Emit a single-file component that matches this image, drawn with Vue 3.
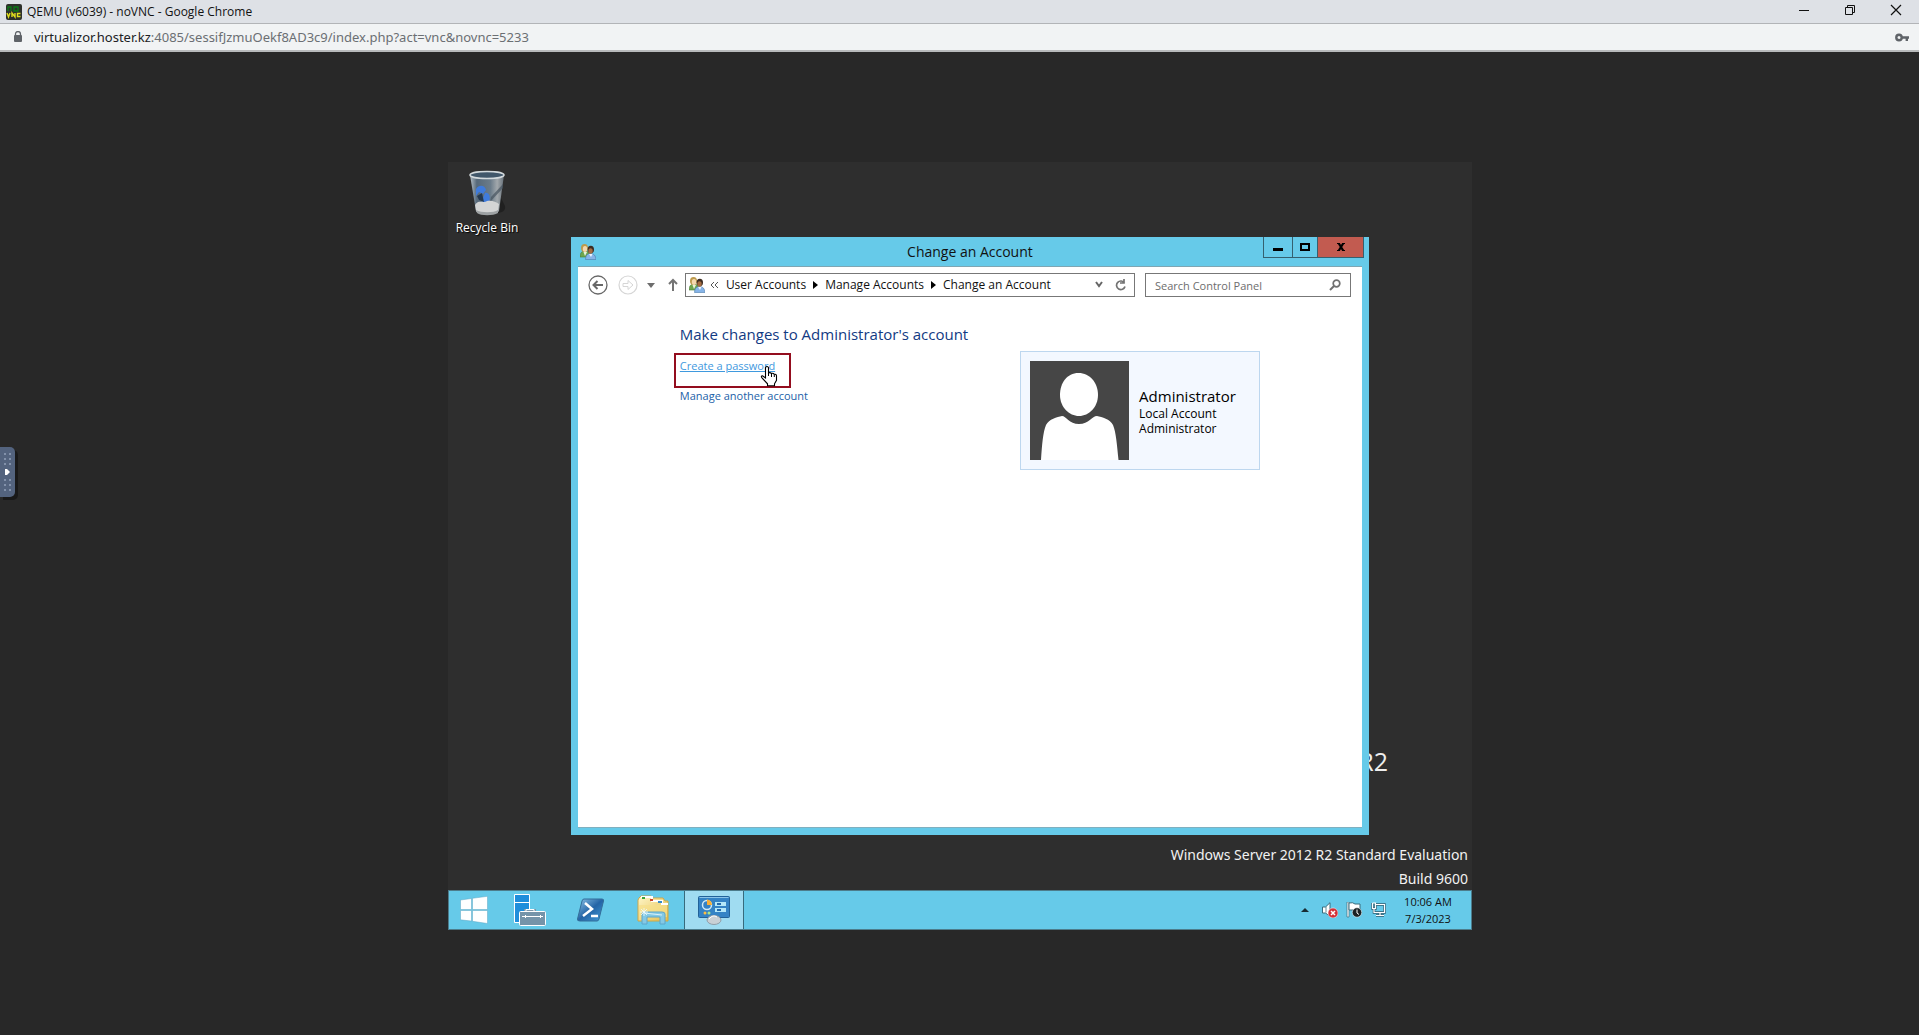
<template>
  <div class="page">
    <header class="chrome-title">
      <svg class="favicon" width="16" height="16" viewBox="0 0 16 16">
        <rect width="16" height="16" rx="2" fill="#2d302b" />
        <path d="M2 7V3h3v4M8 3h4v4H8z" fill="none" stroke="#0b7a16" stroke-width="1.3" />
        <path d="M1 9l1.500 4L4 9M6 13V9l3 4V9M14.500 9.500h-3v3h3" fill="none" stroke="#e0df1c" stroke-width="1.400" />
      </svg>
      <span class="chrome-name">QEMU (v6039) - noVNC - Google Chrome</span>
      <div class="chrome-controls">
        <button aria-label="Minimize"><svg width="12" height="12"><path d="M1 6.500h10" stroke="#111" /></svg></button>
        <button aria-label="Restore">
          <svg width="12" height="12" fill="none" stroke="#111"><path d="M1.500 3.500h7v7h-7zM3.500 3.500v-2h7v7h-2" /></svg>
        </button>
        <button aria-label="Close"><svg width="12" height="12"><path d="M1 1l10 10M11 1L1 11" stroke="#111" stroke-width="1.200" /></svg></button>
      </div>
    </header>
    <div class="chrome-url">
      <svg width="10" height="12" viewBox="0 0 10 12">
        <path d="M2.500 5V3a2.500 2.500 0 0 1 5 0v2" fill="none" stroke="#5f6368" stroke-width="1.300" />
        <rect x="1" y="4" width="8" height="7" rx="1" fill="#5f6368" />
      </svg>
      <span class="url"><b>virtualizor.hoster.kz</b>:4085/sessifJzmuOekf8AD3c9/index.php?act=vnc&amp;novnc=5233</span>
      <svg class="key" width="14" height="9" viewBox="0 0 14 9">
        <circle cx="4" cy="4.500" r="2.700" fill="none" stroke="#5f6368" stroke-width="2.400" />
        <path d="M7 3.200h7v2.600h-1V8h-2.400V5.800H7z" fill="#5f6368" />
      </svg>
    </div>

    <main class="stage">
      <button class="vnc-handle" aria-label="Open control bar">
        <svg width="16" height="50" viewBox="0 0 16 50">
          <g fill="#8291aa">
            <template v-for="y in dots" :key="y">
              <rect x="4" :y="y" width="2" height="2" />
              <rect x="9" :y="y" width="2" height="2" />
            </template>
          </g>
          <path d="M5 22h2l3 3-3 3H5z" fill="#fff" />
        </svg>
      </button>

      <div class="desktop">
        <div class="workspace">
          <a class="recycle" href="#">
            <svg width="38" height="46" viewBox="0 0 38 46">
              <defs>
                <linearGradient id="glass" x1="0" x2="1" y1="0" y2="0">
                  <stop offset="0" stop-color="#b4bec5" />
                  <stop offset=".2" stop-color="#56697a" />
                  <stop offset=".6" stop-color="#6b7c8a" />
                  <stop offset=".8" stop-color="#a2a8ac" />
                  <stop offset="1" stop-color="#67717a" />
                </linearGradient>
              </defs>
              <path d="M31 24l6 12c1 5-4 7-8 7z" fill="#202020" />
              <path d="M2 5l6 36c1 4 21 4 23 0l5-36z" fill="url(#glass)" />
              <path d="M35 14L23 27l-1 5 13-14z" fill="#46535e" opacity=".7" />
              <path d="M8 19c3-5 9-4 10 1l-3 4-4-2-3 4zM14 31l3-8c4-1 6 4 4 9l-5 2z" fill="#3f7bdc" />
              <path d="M9 26l5-3 2 9-5-2z" fill="#24384f" />
              <path d="M7 35c4-6 8-1 12-4 5-1 9 1 12 3l-1 7c-4 4-19 4-22 0z" fill="#d4d5d5" />
              <path d="M8 40c5 3 18 3 22 0v3c-5 3-17 3-21 0z" fill="#9da1a3" />
              <ellipse cx="19" cy="5" rx="17" ry="3.500" fill="#41576a" stroke="#d4dadd" stroke-width="1.500" />
            </svg>
            <span>Recycle Bin</span>
          </a>

          <div class="wallpaper-mark">R2</div>
          <div class="watermark">
            <p>Windows Server 2012 R2 Standard Evaluation</p>
            <p>Build 9600</p>
          </div>

          <section class="window">
            <header class="titlebar">
              <svg class="users-icon" width="16" height="16" viewBox="0 0 16 16"><use href="#users" /></svg>
              <h1>Change an Account</h1>
              <div class="controls">
                <button class="min" aria-label="Minimize window"><svg width="10" height="10"><path d="M0 6h10v3H0z" /></svg></button>
                <button class="max" aria-label="Maximize window">
                  <svg width="10" height="10"><path d="M1 2h8v6H1z" fill="none" stroke="#000" stroke-width="2" /></svg>
                </button>
                <button class="close" aria-label="Close window">
                  <svg width="10" height="8"><path d="M2.500 0l5 8M7.500 0l-5 8" fill="none" stroke="#000" stroke-width="2.200" /><path d="M1 0h3v1H1zM6 0h3v1H6zM1 7h3v1H1zM6 7h3v1H6z" /></svg>
                </button>
              </div>
            </header>

            <div class="client">
              <nav class="navbar">
                <button aria-label="Back">
                  <svg width="20" height="20" fill="none" stroke="#686868">
                    <circle cx="10" cy="10" r="9" stroke-width="1.300" />
                    <path d="M15 10H6M9.500 6l-4 4 4 4" stroke-width="2" />
                  </svg>
                </button>
                <button class="forward" aria-label="Forward">
                  <svg width="20" height="20" fill="none" stroke="#d6d6d6">
                    <circle cx="10" cy="10" r="9" stroke-width="1.200" />
                    <path d="M5 8.500h5v-3l5 4.500-5 4.500v-3H5z" />
                  </svg>
                </button>
                <button class="recent" aria-label="Recent locations"><svg width="8" height="5"><path d="M0 0h8L4 5z" fill="#6d6d6d" /></svg></button>
                <button class="up" aria-label="Up">
                  <svg width="10" height="14"><path d="M5 13V2M1 6l4-4 4 4" fill="none" stroke="#747474" stroke-width="2" /></svg>
                </button>
                <div class="address">
                  <svg width="16" height="16" viewBox="0 0 16 16"><use href="#users" /></svg>
                  <svg class="more" width="9" height="8" fill="none" stroke="#555"><path d="M4 1L1 4l3 3M8 1L5 4l3 3" /></svg>
                  <template v-for="(c, i) in crumbs" :key="c">
                    <svg v-if="i" class="sep" width="5" height="8"><path d="M0 0l5 4-5 4z" /></svg>
                    <button class="crumb">{{ c }}</button>
                  </template>
                  <button class="history" aria-label="Previous locations">
                    <svg width="8" height="8"><path d="M1 1l3 4 3-4" fill="none" stroke="#666" stroke-width="2" /></svg>
                  </button>
                  <button class="refresh" aria-label="Refresh">
                    <svg width="12" height="12"><path d="M9.500 4A4.300 4.300 0 1 0 10 7.500M5 4h4V0" fill="none" stroke="#737373" stroke-width="1.700" /></svg>
                  </button>
                </div>
                <label class="search">
                  <input type="text" placeholder="Search Control Panel" aria-label="Search Control Panel" />
                  <svg width="12" height="12" fill="none" stroke="#707070"><circle cx="7.500" cy="4.500" r="3.300" stroke-width="1.700" /><path d="M5 7l-4 4" stroke-width="2" /></svg>
                </label>
              </nav>

              <div class="content">
                <div class="tasks">
                  <h2>Make changes to Administrator's account</h2>
                  <div class="marked">
                    <a class="hovered" href="#">Create a password</a>
                    <svg class="pointer" width="18" height="22" viewBox="0 0 18 22">
                      <path d="M5.500 13V2.500q1.500-2 3 0V8q1.500-1 3 .5 1.500-.8 2.800.8 2-.5 2.200 1.500v4.500l-2 3.500v2H7.500v-2L2 13q-1.500-2 .5-2.200z" fill="#fff" stroke="#000" stroke-width="1.100" />
                      <path d="M8.500 7v4M11.500 8.500V12M14.300 9.500V12" stroke="#000" fill="none" />
                    </svg>
                  </div>
                  <a class="another" href="#">Manage another account</a>
                </div>
                <div class="account">
                  <svg width="99" height="99" viewBox="0 0 99 99">
                    <path d="M0 0h99v99H0z" fill="#464646" />
                    <path d="M48.500 12C60 12 68 22 68 34S59 55 49 55 30 46 30 34s7-22 18.500-22z" fill="#fff" />
                    <path d="M11 99c1-15 2-28 5-35 3-6 11-8 16-9 4 0 7 8 17 8s13-8 18-8c5 1 13 3 16 9 3 7 4 20 5.500 35z" fill="#fff" />
                  </svg>
                  <div class="account-text">
                    <strong>Administrator</strong>
                    <span>Local Account</span>
                    <span>Administrator</span>
                  </div>
                </div>
              </div>
            </div>
          </section>
        </div>

        <footer class="taskbar">
          <button class="start" aria-label="Start">
            <svg width="28" height="28" viewBox="0 0 28 28" fill="#fff" stroke="#5ca6c4" stroke-width=".5">
              <path d="M.5 4L11.500 2.500v11H.5zM12.500 2.300L27.500.3v13.200h-15zM.5 14.500h11v10.600L.5 23.800zM12.500 14.500h15v13l-15-2.200z" />
            </svg>
          </button>
          <button aria-label="Server Manager">
            <svg width="34" height="34" viewBox="0 0 34 34" stroke="#fff">
              <path d="M2.500 1.500h15v28h-15z" fill="#1f8edb" />
              <path d="M2 9.500h16" />
              <path d="M13.500 20v-2.500h9V20" fill="none" stroke="#7c96aa" stroke-width="3" />
              <path d="M14 19v-2.500h8V19" fill="none" />
              <rect x="7.500" y="18.500" width="26" height="14" rx="1" fill="#7594a9" />
              <path d="M10 23.500h21M13.500 22v3M28.500 22v3" />
            </svg>
          </button>
          <button aria-label="Windows PowerShell">
            <svg width="30" height="26" viewBox="0 0 30 26">
              <defs>
                <linearGradient id="ps" x1="0" y1="0" x2="1" y2="1"><stop stop-color="#8fc6e9" /><stop offset=".5" stop-color="#2464a6" /><stop offset="1" stop-color="#419cda" /></linearGradient>
              </defs>
              <path d="M8 2h18q2 0 1.500 2L23 22q-.5 2-2 2H4q-3 0-2.500-2L6 4q.5-2 2-2z" fill="url(#ps)" stroke="#336d99" />
              <path d="M9 6l7 6L7 19M15 19h7" fill="none" stroke="#fff" stroke-width="2.500" />
            </svg>
          </button>
          <button aria-label="File Explorer">
            <svg width="34" height="32" viewBox="0 0 34 32">
              <defs>
                <linearGradient id="folder" x1="0" y1="0" x2="1" y2="1"><stop stop-color="#fff7c9" /><stop offset="1" stop-color="#e4bd4b" /></linearGradient>
              </defs>
              <path d="M3 4l2-2h10l2 2h10l2 3h3v20H2V6z" fill="url(#folder)" stroke="#cda746" />
              <path d="M5 3h11v4h10v3h6" fill="none" stroke="#fff" stroke-width="2" />
              <path d="M6 3h3v2H6z" fill="#39a439" /><path d="M14 5h3v2h-3z" fill="#cb472d" /><path d="M22 7h4v2h-4z" fill="#398ac6" />
              <path d="M3 11h28v12H3z" fill="#f7e08a" opacity=".7" />
              <path d="M6 30V20q0-2 2-2h18q3 0 3 2v10h-5v-7H11v7z" fill="#83c9e5" stroke="#5da6ca" />
              <path d="M8 19l18 2M8 14v8M4 18h8M5 15l6 6M11 15l-6 6" stroke="#effcff" stroke-width=".8" />
            </svg>
          </button>
          <button class="active" aria-label="Control Panel">
            <svg width="34" height="30" viewBox="0 2 34 30">
              <rect x="1.500" y="3.500" width="31" height="21" rx="1" fill="#3483c5" stroke="#216299" />
              <path d="M2.500 4.500h29" stroke="#8bc5e9" />
              <circle cx="10" cy="12" r="4.500" fill="#3382c5" stroke="#cfeaf7" stroke-width="1.500" />
              <path d="M10 12V6.500a5.500 5.500 0 0 1 5 5.500z" fill="#f6ae36" />
              <path d="M18 9h11v4H18zM18 15h11v4H18z" fill="#b4e7f8" /><path d="M20 10h4v2h-4zM20 16h4v2h-4z" fill="#256aac" />
              <circle cx="8" cy="20" r="1.500" fill="#ffbd40" /><circle cx="12" cy="20" r="1.500" fill="#a9e78b" />
              <ellipse cx="17" cy="27" rx="7" ry="4.500" fill="#c9d0d5" stroke="#8f9da7" />
              <path d="M12 26q4-5 8-2" stroke="#fff" fill="none" />
            </svg>
          </button>

          <div class="tray">
            <button class="tray-up" aria-label="Show hidden icons"><svg width="8" height="4"><path d="M0 4h8L4 0z" fill="#182b33" /></svg></button>
            <button aria-label="Volume">
              <svg width="16" height="16" viewBox="0 0 16 16">
                <path d="M.5 5h3L8 .7v13.600L3.500 11h-3z" fill="#fff" stroke="#3a6c7d" /><path d="M4 4.500v6" stroke="#638b99" />
                <circle cx="11" cy="11" r="5" fill="#d32f37" stroke="#fff" stroke-width=".5" /><path d="M9 9l4 4M13 9l-4 4" stroke="#fff" stroke-width="1.500" />
              </svg>
            </button>
            <button aria-label="Action Center">
              <svg width="16" height="16" viewBox="0 0 16 16">
                <path d="M1 0h2v15H1z" fill="#fff" stroke="#3a6c7d" stroke-width=".7" /><path d="M3 1q4-1 6 1h5v8H9L7 8H3z" fill="#fff" stroke="#3a6c7d" />
                <circle cx="11" cy="10.500" r="4.700" fill="#1a2225" stroke="#fff" stroke-width=".5" /><path d="M11 7.500v3.500l2 1.500" stroke="#fff" fill="none" />
              </svg>
            </button>
            <button aria-label="Network">
              <svg width="16" height="16" viewBox="0 0 16 16" fill="none">
                <path d="M6 2.500h8.500v8H6M10 11v3M6 13.500h8M2.500 1v5.500h3V1M4 6v4.500h2" stroke="#315d70" stroke-width="2.500" />
                <path d="M6 2.500h8.500v8H6M10 11v3M6 13.500h8M2.500 1v5.500h3V1h-3M4 6v4.500h2" stroke="#fff" stroke-width="1.200" />
              </svg>
            </button>
            <button class="clock"><span>10:06 AM</span><span>7/3/2023</span></button>
          </div>
        </footer>
      </div>
    </main>

    <!-- shared two-user symbol -->
    <svg class="sprite" width="0" height="0">
      <symbol id="users" viewBox="0 0 16 16">
        <path d="M0 13q0-6 5-6t5 6z" fill="#6da64e" stroke="#4a7c36" stroke-width=".6" />
        <ellipse cx="4.500" cy="4" rx="3.500" ry="4" fill="#bd9a4c" />
        <ellipse cx="5" cy="5" rx="2.200" ry="3" fill="#f4d8ae" />
        <path d="M3.500 8L5 12l2-4z" fill="#e7f3da" />
        <path d="M5.500 15.500q0-6 5-6t5.500 6z" fill="#86b4e8" stroke="#4c7cad" stroke-width=".6" />
        <ellipse cx="10.800" cy="5.500" rx="3.200" ry="3.800" fill="#3d2c21" />
        <ellipse cx="10.500" cy="7" rx="2.200" ry="2.800" fill="#a66d42" />
        <path d="M9 10l2 3 1.500-3z" fill="#eef6ff" />
      </symbol>
    </svg>
  </div>
</template>

<script setup>
const crumbs = ['User Accounts', 'Manage Accounts', 'Change an Account']
const dots = [6, 11, 16, 32, 37, 42]
</script>

<style>
body {
  margin: 0;
  background: #282828;
}
</style>

<style scoped>
.page {
  display: flex;
  flex-direction: column;
  min-height: 100vh;
  font-family: "Open Sans", "Noto Sans", sans-serif;
  font-size: 11px;
  color: #111;
  background: #282828;
}

* {
  box-sizing: border-box;
}

button {
  display: flex;
  align-items: center;
  justify-content: center;
  padding: 0;
  border: 0;
  background: none;
  font: inherit;
  color: inherit;
}

svg {
  display: block;
  flex: none;
}

h1, h2, p {
  margin: 0;
  font-weight: 400;
}

.sprite {
  position: absolute;
}

/* browser frame */
.chrome-title {
  display: flex;
  align-items: center;
  height: 24px;
  padding-left: 6px;
  background: #dee1e6;
  border-bottom: 1px solid #b2b4b7;
}

.chrome-name {
  flex: 1;
  margin-left: 5px;
  font-size: 12px;
}

.chrome-controls {
  display: flex;
  align-self: stretch;
}

.chrome-controls button {
  width: 46px;
  height: 20px;
}

.chrome-url {
  display: flex;
  align-items: center;
  height: 28px;
  padding: 0 10px 0 13px;
  background: #f1f3f4;
  border-bottom: 2px solid #b8babb;
  font-family: "Noto Sans", sans-serif;
  font-size: 13px;
}

.url {
  flex: 1;
  margin-left: 11px;
  color: #6b6f73;
}

.url b {
  font-weight: 400;
  color: #202124;
}

/* remote screen */
.stage {
  position: relative;
  flex: 1;
  display: flex;
  align-items: center;
  justify-content: center;
  padding: 5px 0 0 1px;
}

.vnc-handle {
  position: absolute;
  left: 0;
  top: calc(50% - 97px);
  width: 15px;
  height: 50px;
  justify-content: flex-start;
  background: #53637e;
  border-radius: 0 5px 5px 0;
  box-shadow: 3px 3px 0 #191919;
}

.desktop {
  display: flex;
  flex-direction: column;
  width: 100%;
  max-width: 1024px;
  min-height: 768px;
  background: #2e2e2e;
}

.workspace {
  position: relative;
  flex: 1;
}

.recycle {
  display: flex;
  flex-direction: column;
  align-items: center;
  gap: 4px;
  width: 78px;
  padding-top: 8px;
  color: #fff;
  font-size: 12px;
  text-decoration: none;
  line-height: 16px;
  text-shadow: 1px 1px 1px #000;
}

.wallpaper-mark {
  position: absolute;
  right: 84px;
  bottom: 113px;
  font-size: 25px;
  line-height: 32px;
  color: #eee;
}

.watermark {
  position: absolute;
  right: 4px;
  bottom: -1px;
  font-family: "Noto Sans", sans-serif;
  font-size: 14px;
  line-height: 24px;
  color: #f2f2f2;
  text-align: right;
}

.window {
  position: absolute;
  top: 75px;
  right: 103px;
  bottom: 55px;
  left: 12%;
  display: flex;
  flex-direction: column;
  padding: 0 7px 7px;
  background: #66cae9;
}

.titlebar {
  display: grid;
  grid-template-columns: 1fr auto 1fr;
  align-items: center;
  height: 29px;
}

.users-icon {
  margin-left: 2px;
}

.titlebar h1 {
  font-size: 14px;
  line-height: 20px;
}

.controls {
  display: flex;
  align-self: start;
  justify-content: flex-end;
  margin-right: -2px;
}

.controls button {
  height: 21px;
  border: 1px solid #35606f;
  border-top: 0;
}

.controls .min {
  width: 29px;
  border-right: 0;
}

.controls .max {
  width: 26px;
}

.controls .close {
  width: 46px;
  border-left: 0;
  background: #c25b50;
}

.client {
  flex: 1;
  border-top: 1px solid #7fa6b3;
  border-bottom: 1px solid #7fb0c0;
  background: #fff;
}

.navbar {
  display: flex;
  align-items: center;
  padding: 6px 11px 0 10px;
}

.forward {
  margin-left: 10px;
}

.recent {
  margin-left: 9px;
}

.up {
  margin: 0 7px 0 13px;
}

.address, .search {
  display: flex;
  align-items: center;
  height: 24px;
  border: 1px solid #777;
}

.address {
  flex: 1;
  padding: 0 7px 0 3px;
  font-size: 12px;
  line-height: 16px;
}

.more {
  margin: 0 7px 0 5px;
}

.sep {
  margin: 0 7px;
}

.history {
  margin-left: auto;
}

.refresh {
  margin-left: 12px;
}

.search {
  width: 27%;
  margin-left: 10px;
  padding: 0 9px;
}

.search input {
  flex: 1;
  min-width: 0;
  padding: 0;
  border: 0;
  outline: 0;
  background: none;
  font: inherit;
}

.search input::placeholder {
  color: #6d6d6d;
  opacity: 1;
}

.content {
  display: grid;
  grid-template-columns: 1fr 240px;
  align-items: start;
  padding: 25px 13% 0;
}

.tasks h2 {
  font-size: 15px;
  line-height: 24px;
  color: #123a83;
}

.tasks a {
  line-height: 16px;
  color: #1c5fa8;
  text-decoration: none;
}

.marked {
  position: relative;
  width: 117px;
  height: 35px;
  margin: 7px 0 0 -6px;
  padding: 3px 4px;
  border: 2px solid #930d1e;
}

.marked .hovered {
  display: block;
  color: #3f99de;
  text-decoration: underline;
}

.pointer {
  position: absolute;
  right: 11px;
  bottom: -1px;
}

.tasks .another {
  display: inline-block;
  line-height: 14px;
}

.account {
  display: flex;
  align-items: center;
  gap: 10px;
  margin-top: 29px;
  padding: 9px;
  border: 1px solid #bdd7ef;
  background: #f3f8ff;
}

.account-text {
  display: flex;
  flex-direction: column;
  padding-top: 2px;
  font-size: 12px;
  line-height: 15px;
  color: #000;
}

.account-text strong {
  font-size: 15px;
  font-weight: 400;
  line-height: 19px;
}

/* taskbar */
.taskbar {
  display: flex;
  height: 40px;
  border: 1px solid #4d7c8b;
  background: #66cae9;
}

.taskbar > button {
  width: 62px;
}

.taskbar > .start {
  width: 49px;
}

.taskbar > .active {
  width: 60px;
  border: solid #376b7d;
  border-width: 0 1px;
  background: #a0dcf1;
}

.tray {
  display: flex;
  align-items: center;
  gap: 8px;
  margin-left: auto;
  padding-right: 13px;
}

.tray-up {
  margin-right: 5px;
}

.clock {
  flex-direction: column;
  width: 60px;
  margin-left: 4px;
  line-height: 17px;
}
</style>
